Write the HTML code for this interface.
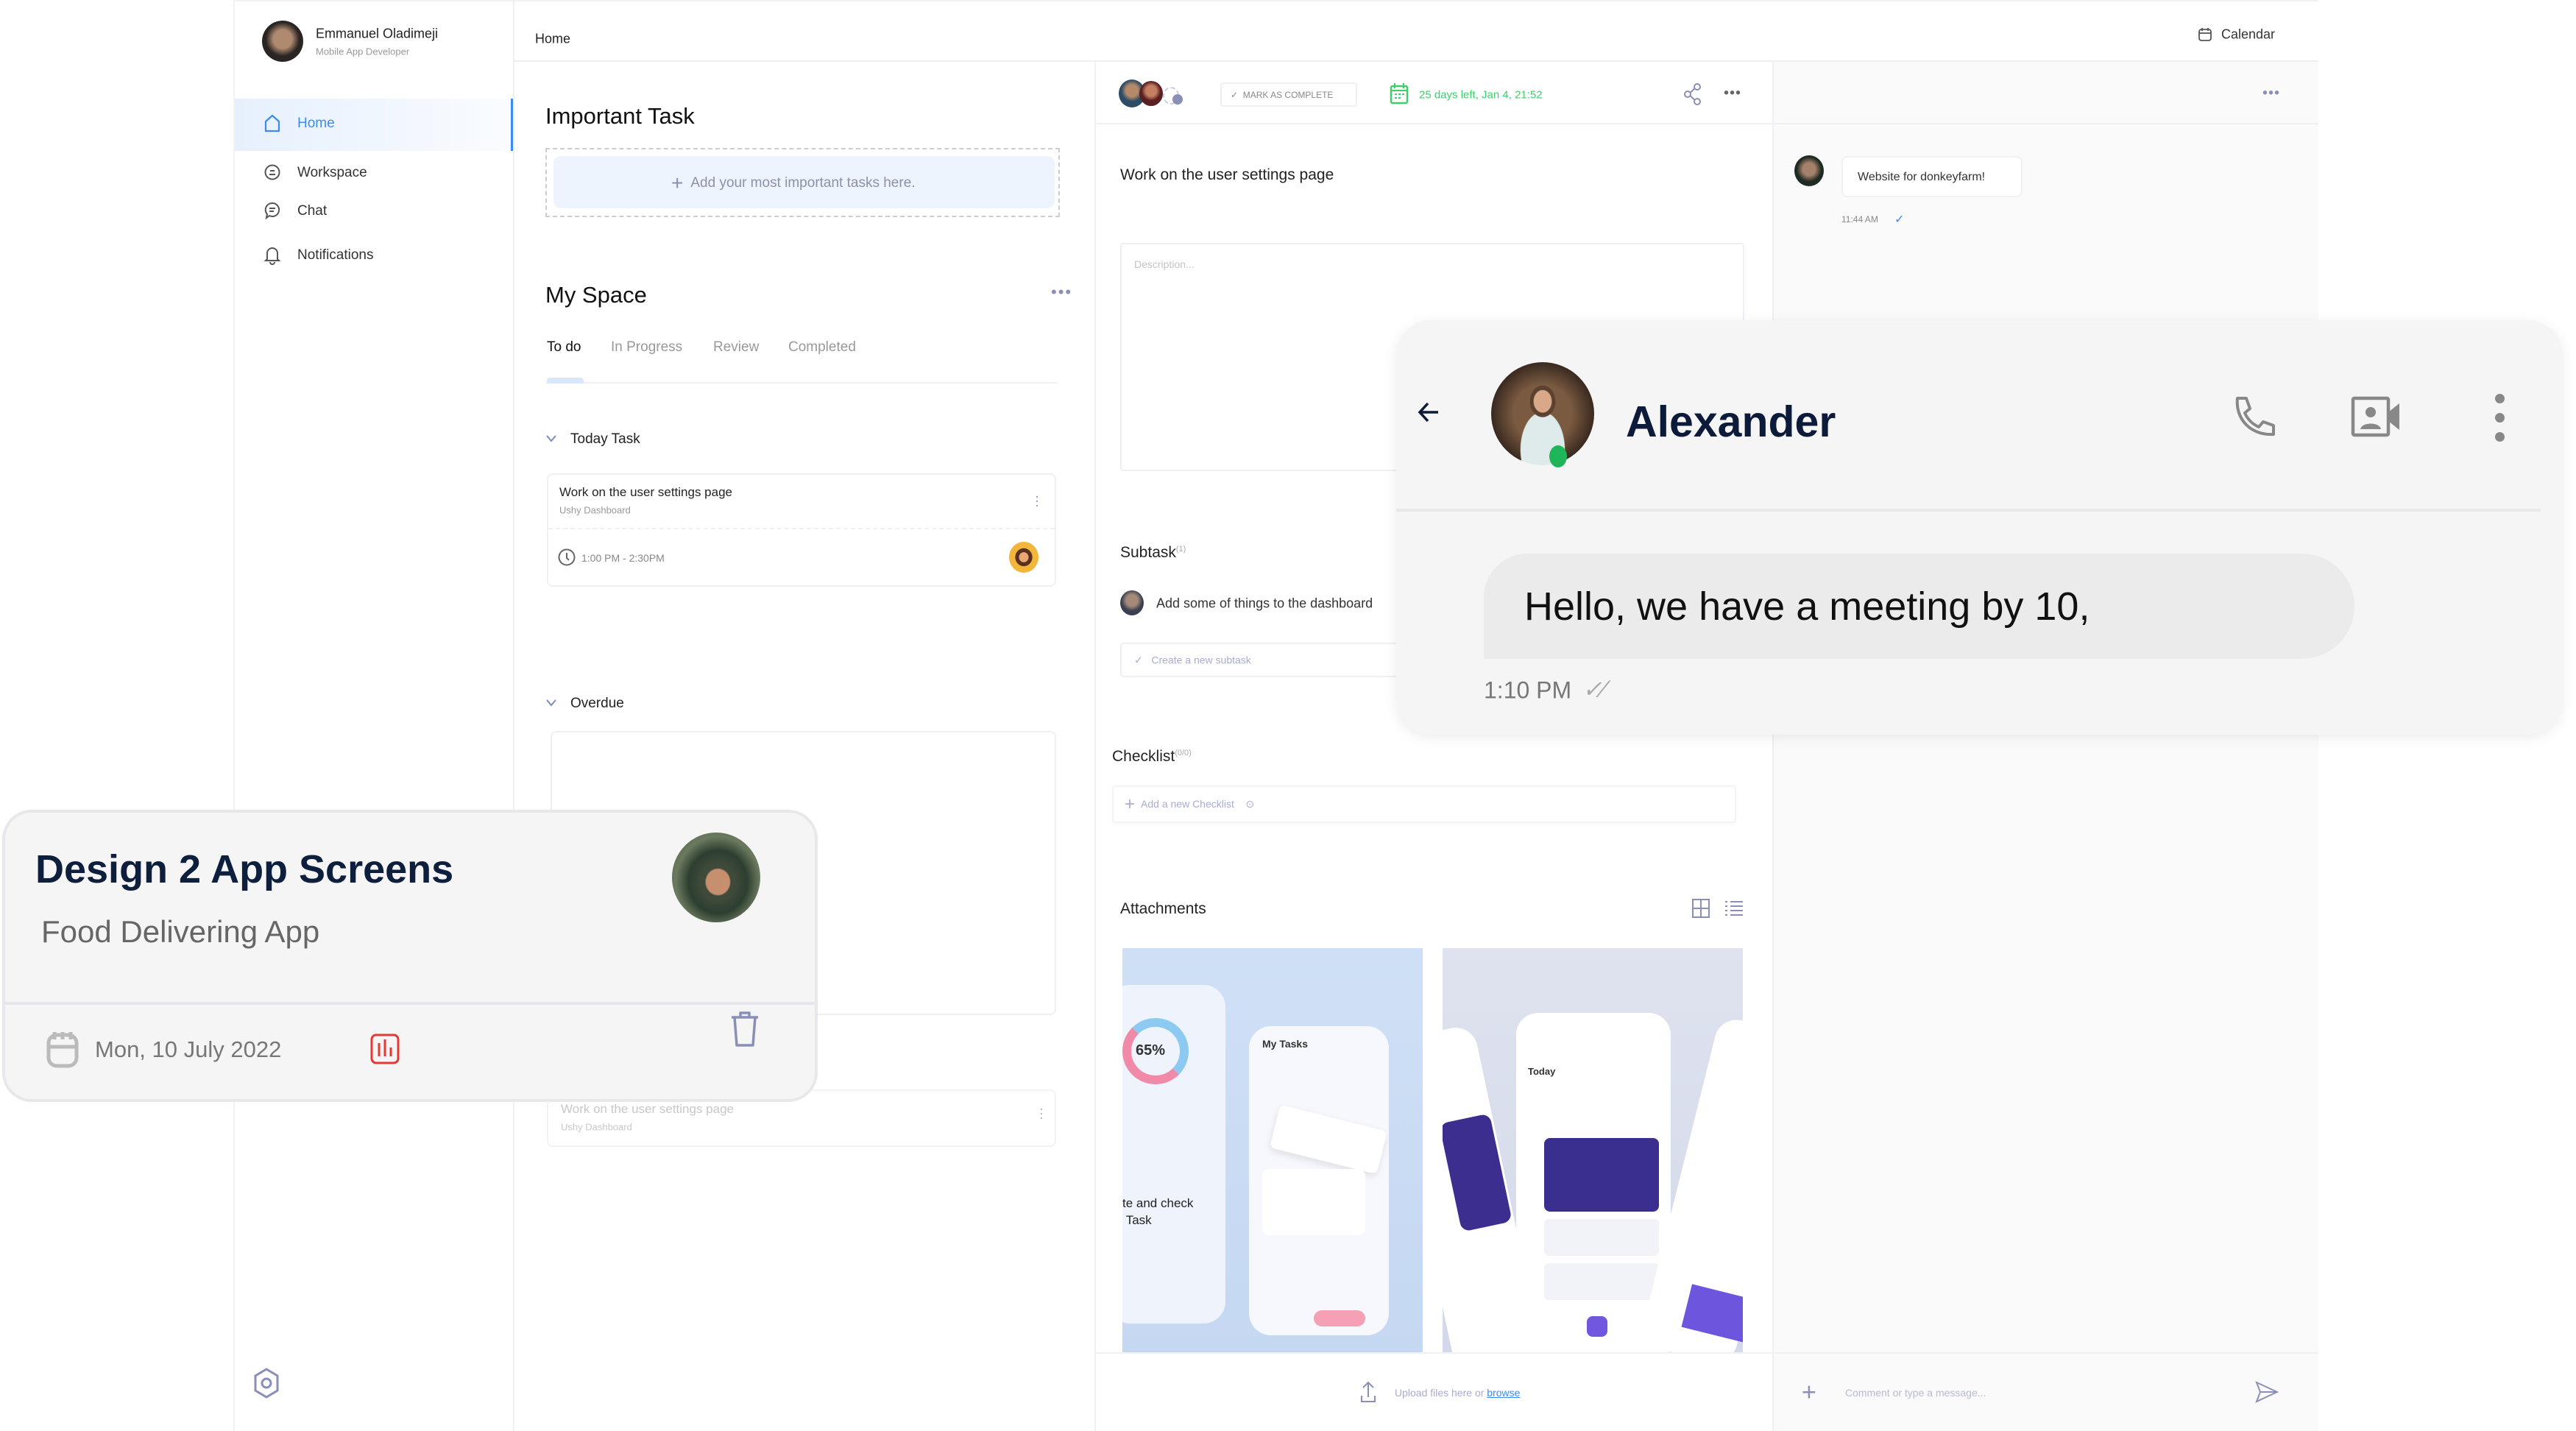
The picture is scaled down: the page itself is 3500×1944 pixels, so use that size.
<!DOCTYPE html>
<html><head><meta charset="utf-8"><style>
*{margin:0;padding:0;box-sizing:border-box}
body{width:3500px;height:1944px;background:#fff;position:relative;overflow:hidden;font-family:"Liberation Sans",sans-serif;color:#222}
.a{position:absolute;white-space:nowrap}
.t{transform:translateY(-50%)}
</style></head><body>

<div class="a" style="left:317px;top:0;width:2833px;height:1944px;background:#fff;border-top:2px solid #f2f2f4"></div>
<div class="a" style="left:317px;top:0;width:382px;height:1944px;border-right:2px solid #eef0f3;border-left:2px solid #f3f3f5"></div>
<div class="a" style="left:356px;top:28px;width:56px;height:56px;border-radius:50%;background:radial-gradient(circle at 50% 45%,#b08a70 0 30%,#2a2522 55%)"></div>
<div class="a t" style="left:429px;top:46px;font-size:18px;color:#222">Emmanuel Oladimeji</div>
<div class="a t" style="left:429px;top:70px;font-size:13px;color:#999">Mobile App Developer</div>
<div class="a" style="left:319px;top:134px;width:377px;height:71px;background:linear-gradient(90deg,#e6f0fd,#fafcff)"></div>
<div class="a" style="left:694px;top:134px;width:3px;height:71px;background:#3b8bf5"></div>
<svg class="a" style="left:358px;top:154px" width="24" height="26" viewBox="0 0 24 26"><path d="M3 24V11L12 3l9 8v13z" fill="none" stroke="#3b8bf5" stroke-width="2.2" stroke-linejoin="round"/></svg>
<div class="a t" style="left:404px;top:168px;font-size:19px;color:#3b8bf5">Home</div>
<svg class="a" style="left:358px;top:221px" width="24" height="26" viewBox="0 0 24 26"><circle cx="12" cy="13" r="9.5" fill="none" stroke="#555" stroke-width="2"/><path d="M8 16h8M9 11h6" stroke="#555" stroke-width="2"/></svg>
<div class="a t" style="left:404px;top:235px;font-size:19px;color:#333">Workspace</div>
<svg class="a" style="left:358px;top:273px" width="24" height="26" viewBox="0 0 24 26"><path d="M12 3a9 9 0 1 1-4 17l-4 3 1-5A9 9 0 0 1 12 3z" fill="none" stroke="#555" stroke-width="2"/><path d="M8 10h8M8 14h6" stroke="#555" stroke-width="2"/></svg>
<div class="a t" style="left:404px;top:287px;font-size:19px;color:#333">Chat</div>
<svg class="a" style="left:358px;top:332px" width="24" height="28" viewBox="0 0 24 28"><path d="M5 20V12a7 7 0 0 1 14 0v8l2 2H3z M9 24a3 3 0 0 0 6 0" fill="none" stroke="#555" stroke-width="2"/></svg>
<div class="a t" style="left:404px;top:347px;font-size:19px;color:#333">Notifications</div>
<svg class="a" style="left:342px;top:1857px" width="40" height="44" viewBox="0 0 40 44"><path d="M20 3l15 9v20l-15 9-15-9V12z" fill="none" stroke="#8a8fb8" stroke-width="3"/><circle cx="20" cy="22" r="6" fill="none" stroke="#8a8fb8" stroke-width="3"/></svg>

<div class="a" style="left:699px;top:82px;width:2451px;height:2px;background:#eef0f3"></div>
<div class="a t" style="left:727px;top:53px;font-size:18px;color:#222">Home</div>
<svg class="a" style="left:2986px;top:37px" width="20" height="20" viewBox="0 0 20 20"><rect x="2" y="3" width="16" height="15" rx="3" fill="none" stroke="#555" stroke-width="1.8"/><path d="M2 8h16M6 1v4M14 1v4" stroke="#555" stroke-width="1.8"/></svg>
<div class="a t" style="left:3018px;top:47px;font-size:18px;color:#333">Calendar</div>

<div class="a" style="left:1487px;top:84px;width:2px;height:1860px;background:#eef0f3"></div>
<div class="a" style="left:2408px;top:84px;width:742px;height:1860px;background:#fafafa;border-left:2px solid #eef0f3"></div>
<div class="a" style="left:1489px;top:167px;width:1661px;height:2px;background:#eef0f3"></div>

<div class="a t" style="left:741px;top:158px;font-size:31px;color:#111">Important Task</div>
<div class="a" style="left:741px;top:201px;width:699px;height:94px;border:2px dashed #c9cdd4"></div>
<div class="a" style="left:752px;top:212px;width:681px;height:71px;background:#eef4fd;border-radius:10px"></div>
<div class="a t" style="left:912px;top:249px;font-size:19px;color:#8a93a6"><span style="font-size:28px;vertical-align:-4px;margin-right:10px">+</span>Add your most important tasks here.</div>
<div class="a t" style="left:741px;top:401px;font-size:31px;color:#111">My Space</div>
<div class="a t" style="left:1428px;top:397px;font-size:22px;color:#8a8fb8;letter-spacing:2px">•••</div>
<div class="a t" style="left:743px;top:472px;font-size:19px;color:#111">To do</div>
<div class="a t" style="left:830px;top:472px;font-size:19px;color:#999">In Progress</div>
<div class="a t" style="left:969px;top:472px;font-size:19px;color:#999">Review</div>
<div class="a t" style="left:1071px;top:472px;font-size:19px;color:#999">Completed</div>
<div class="a" style="left:743px;top:519px;width:694px;height:2px;background:#eef0f3"></div>
<div class="a" style="left:743px;top:513px;width:50px;height:8px;background:#d8e7fb;border-radius:4px 4px 0 0"></div>
<svg class="a" style="left:741px;top:589px" width="16" height="14" viewBox="0 0 16 14"><path d="M2 3l6 7 6-7" fill="none" stroke="#7b8ab8" stroke-width="2"/></svg>
<div class="a t" style="left:775px;top:597px;font-size:19px;color:#222">Today Task</div>
<div class="a" style="left:743px;top:643px;width:692px;height:154px;border:2px solid #eef0f3;border-radius:8px"></div>
<div class="a t" style="left:760px;top:669px;font-size:17px;color:#222">Work on the user settings page</div>
<div class="a t" style="left:760px;top:693px;font-size:13px;color:#999">Ushy Dashboard</div>
<div class="a t" style="left:1406px;top:680px;font-size:18px;color:#8a8fb8;line-height:6px;width:4px">·<br>·<br>·</div>
<div class="a" style="left:745px;top:717px;width:688px;border-top:2px dashed #eef0f3"></div>
<svg class="a" style="left:757px;top:744px" width="26" height="26" viewBox="0 0 26 26"><circle cx="13" cy="13" r="10.5" fill="none" stroke="#666" stroke-width="2"/><path d="M13 7v7l3 3" fill="none" stroke="#666" stroke-width="2"/></svg>
<div class="a t" style="left:790px;top:758px;font-size:14px;color:#888">1:00 PM - 2:30PM</div>
<div class="a" style="left:1371px;top:736px;width:40px;height:42px;border-radius:50%;background:radial-gradient(ellipse at 50% 50%,#e7a872 0 22%,#5a3020 24% 40%,#f2b73a 42%)"></div>
<svg class="a" style="left:741px;top:948px" width="16" height="14" viewBox="0 0 16 14"><path d="M2 3l6 7 6-7" fill="none" stroke="#7b8ab8" stroke-width="2"/></svg>
<div class="a t" style="left:775px;top:956px;font-size:19px;color:#222">Overdue</div>
<div class="a" style="left:748px;top:993px;width:687px;height:386px;border:2px solid #eef0f3;border-radius:8px"></div>
<div class="a" style="left:743px;top:1480px;width:692px;height:78px;border:2px solid #f2f3f5;border-radius:8px"></div>
<div class="a t" style="left:762px;top:1507px;font-size:17px;color:#c8c8cc">Work on the user settings page</div>
<div class="a t" style="left:762px;top:1531px;font-size:13px;color:#c8c8cc">Ushy Dashboard</div>
<div class="a t" style="left:1412px;top:1512px;font-size:18px;color:#a8acd0;line-height:6px;width:4px">·<br>·<br>·</div>

<div class="a" style="left:1520px;top:108px;width:36px;height:38px;border-radius:50%;background:radial-gradient(circle at 50% 40%,#b58a6a 0 28%,#2d4c66 50%)"></div>
<div class="a" style="left:1548px;top:110px;width:32px;height:34px;border-radius:50%;background:radial-gradient(circle at 50% 40%,#c47e62 0 28%,#5a1f22 50%)"></div>
<div class="a" style="left:1580px;top:118px;width:22px;height:24px;border-radius:50%;border:2px dashed #ccd;"></div>
<div class="a" style="left:1593px;top:128px;width:14px;height:14px;border-radius:50%;background:#8a8fb8"></div>
<div class="a" style="left:1658px;top:112px;width:186px;height:33px;border:2px solid #eef0f3;border-radius:4px"></div>
<div class="a t" style="left:1672px;top:129px;font-size:12px;color:#888">✓ &nbsp;MARK AS COMPLETE</div>
<svg class="a" style="left:1888px;top:112px" width="26" height="30" viewBox="0 0 26 30"><rect x="2" y="5" width="22" height="23" rx="2" fill="none" stroke="#3ecf6c" stroke-width="2.5"/><path d="M2 11h22M7 1v7M19 1v7M7 16h3M12 16h3M17 16h3M7 21h3M12 21h3" stroke="#3ecf6c" stroke-width="2"/></svg>
<div class="a t" style="left:1928px;top:129px;font-size:15px;color:#3ecf6c">25 days left, Jan 4, 21:52</div>
<svg class="a" style="left:2286px;top:112px" width="28" height="32" viewBox="0 0 28 32"><circle cx="20" cy="6" r="4" fill="none" stroke="#8a8fb8" stroke-width="2"/><circle cx="7" cy="16" r="4" fill="none" stroke="#8a8fb8" stroke-width="2"/><circle cx="20" cy="26" r="4" fill="none" stroke="#8a8fb8" stroke-width="2"/><path d="M10.5 14l6-6M10.5 18l6 6" stroke="#8a8fb8" stroke-width="2"/></svg>
<div class="a t" style="left:2342px;top:127px;font-size:20px;color:#666;letter-spacing:1px">•••</div>
<div class="a t" style="left:1522px;top:238px;font-size:21px;color:#222">Work on the user settings page</div>
<div class="a" style="left:1522px;top:330px;width:848px;height:310px;border:2px solid #eef0f3;border-radius:4px"></div>
<div class="a t" style="left:1541px;top:359px;font-size:14px;color:#c4c4c8">Description...</div>
<div class="a t" style="left:1522px;top:751px;font-size:21px;color:#222">Subtask<sup style="font-size:11px;color:#aaa">(1)</sup></div>
<div class="a" style="left:1522px;top:802px;width:32px;height:34px;border-radius:50%;background:radial-gradient(circle at 50% 40%,#a58a7a 0 30%,#3a4050 55%)"></div>
<div class="a t" style="left:1571px;top:820px;font-size:18px;color:#333">Add some of things to the dashboard</div>
<div class="a" style="left:1522px;top:873px;width:844px;height:47px;border:2px solid #eef0f3;border-radius:4px"></div>
<div class="a t" style="left:1541px;top:897px;font-size:14px;color:#a8acd0">✓ &nbsp;&nbsp;Create a new subtask</div>
<div class="a t" style="left:1511px;top:1028px;font-size:21px;color:#222">Checklist<sup style="font-size:11px;color:#aaa">(0/0)</sup></div>
<div class="a" style="left:1511px;top:1067px;width:848px;height:51px;border:2px solid #f3f4f6;border-radius:4px;box-shadow:0 2px 6px rgba(0,0,0,.03)"></div>
<div class="a t" style="left:1528px;top:1093px;font-size:14px;color:#a8acd0"><span style="font-size:24px;vertical-align:-3px;margin-right:8px">+</span>Add a new Checklist &nbsp;&nbsp;&nbsp;⊙</div>
<div class="a t" style="left:1522px;top:1235px;font-size:21px;color:#222">Attachments</div>
<svg class="a" style="left:2298px;top:1220px" width="26" height="28" viewBox="0 0 26 28"><rect x="2" y="2" width="22" height="24" fill="none" stroke="#8a8fb8" stroke-width="2"/><path d="M13 2v24M2 14h22" stroke="#8a8fb8" stroke-width="2"/></svg>
<svg class="a" style="left:2342px;top:1222px" width="28" height="24" viewBox="0 0 28 24"><path d="M2 3h3M9 3h17M2 9h3M9 9h17M2 15h3M9 15h17M2 21h3M9 21h17" stroke="#8a8fb8" stroke-width="2"/></svg>
<div class="a" style="left:1525px;top:1288px;width:408px;height:549px;background:linear-gradient(180deg,#cfe0f6,#c5d8f2);overflow:hidden">
  <div class="a" style="left:-20px;top:50px;width:160px;height:460px;background:#eef3fc;border-radius:30px"></div>
  <div class="a" style="left:0;top:95px;width:90px;height:90px;border-radius:50%;border:12px solid #f08aa8;border-top-color:#8ccaf2;border-right-color:#8ccaf2"></div>
  <div class="a" style="left:18px;top:128px;font-size:20px;font-weight:bold;color:#333">65%</div>
  <div class="a" style="left:0;top:335px;font-size:17px;color:#222;line-height:23px">te and check<br>&nbsp;Task</div>
  <div class="a" style="left:172px;top:106px;width:190px;height:420px;background:#f6f8fd;border-radius:30px"></div>
  <div class="a" style="left:190px;top:122px;font-size:14px;font-weight:bold;color:#333">My Tasks</div>
  <div class="a" style="left:205px;top:230px;width:150px;height:60px;background:#fff;border-radius:8px;transform:rotate(14deg);box-shadow:0 4px 10px rgba(0,0,0,.1)"></div>
  <div class="a" style="left:190px;top:300px;width:140px;height:90px;background:#fff;border-radius:10px"></div>
  <div class="a" style="left:260px;top:492px;width:70px;height:22px;background:#f5a0b5;border-radius:11px"></div>
</div>
<div class="a" style="left:1960px;top:1288px;width:408px;height:549px;background:linear-gradient(180deg,#dfe3ef,#d3d8ea);overflow:hidden">
  <div class="a" style="left:-30px;top:110px;width:120px;height:460px;background:#fff;border-radius:30px;transform:rotate(-12deg)"></div>
  <div class="a" style="left:10px;top:230px;width:70px;height:150px;background:#3b2e8f;border-radius:12px;transform:rotate(-12deg)"></div>
  <div class="a" style="left:100px;top:88px;width:210px;height:480px;background:#fff;border-radius:30px"></div>
  <div class="a" style="left:116px;top:160px;font-size:13px;font-weight:bold;color:#333">Today</div>
  <div class="a" style="left:138px;top:258px;width:156px;height:100px;background:#3a2f8e;border-radius:8px"></div>
  <div class="a" style="left:138px;top:368px;width:156px;height:50px;background:#f2f3f8;border-radius:6px"></div>
  <div class="a" style="left:138px;top:428px;width:156px;height:50px;background:#f2f3f8;border-radius:6px"></div>
  <div class="a" style="left:196px;top:500px;width:28px;height:28px;background:#7157e0;border-radius:8px"></div>
  <div class="a" style="left:320px;top:100px;width:130px;height:460px;background:#fff;border-radius:30px;transform:rotate(14deg)"></div>
  <div class="a" style="left:330px;top:470px;width:120px;height:60px;background:#6d55dd;transform:rotate(14deg)"></div>
</div>
<div class="a" style="left:1489px;top:1837px;width:1661px;height:2px;background:#f0f1f3"></div>
<svg class="a" style="left:1848px;top:1874px" width="22" height="32" viewBox="0 0 22 32"><path d="M11 24V4M4 11l7-7 7 7M2 22v8h18v-8" fill="none" stroke="#8a8fb8" stroke-width="2"/></svg>
<div class="a t" style="left:1895px;top:1892px;font-size:14px;color:#a8acd0">Upload files here or <span style="color:#3b8bf5;text-decoration:underline">browse</span></div>

<div class="a t" style="left:3074px;top:127px;font-size:20px;color:#8a8fb8;letter-spacing:1px">•••</div>
<div class="a" style="left:2438px;top:211px;width:40px;height:42px;border-radius:50%;background:radial-gradient(circle at 50% 45%,#a5806a 0 28%,#1f2a22 55%)"></div>
<div class="a" style="left:2502px;top:212px;width:246px;height:56px;background:#fff;border:2px solid #f0f1f3;border-radius:8px"></div>
<div class="a t" style="left:2524px;top:241px;font-size:16px;color:#333">Website for donkeyfarm!</div>
<div class="a t" style="left:2502px;top:298px;font-size:12px;color:#888">11:44 AM</div>
<div class="a t" style="left:2574px;top:298px;font-size:16px;color:#3b8bf5">✓</div>
<div class="a t" style="left:2448px;top:1892px;font-size:34px;color:#8a8fb8">+</div>
<div class="a t" style="left:2507px;top:1892px;font-size:14px;color:#b8bbd0">Comment or type a message...</div>
<svg class="a" style="left:3064px;top:1876px" width="32" height="30" viewBox="0 0 32 30"><path d="M2 2l28 13L2 28l5-13z M7 15h23" fill="none" stroke="#8a8fb8" stroke-width="2"/></svg>

<div class="a" style="left:1897px;top:435px;width:1585px;height:563px;background:#f5f5f5;border-radius:48px;box-shadow:0 4px 18px rgba(0,0,0,.08)"></div>
<div class="a" style="left:1897px;top:691px;width:1555px;height:4px;background:#e8e8e8"></div>
<svg class="a" style="left:1924px;top:540px" width="36" height="40" viewBox="0 0 36 40"><path d="M30 20H6M16 8L5 20l11 12" fill="none" stroke="#0d1b3a" stroke-width="3.5"/></svg>
<div class="a" style="left:2026px;top:492px;width:140px;height:140px;border-radius:50%;background:radial-gradient(ellipse at 50% 38%,#d8a888 0 12%,#5b4230 13% 17%,transparent 18%),radial-gradient(ellipse at 50% 85%,#dfeaea 0 30%,transparent 31%),radial-gradient(circle,#7a5a40 0 40%,#3a2a20 70%)"></div>
<div class="a" style="left:2105px;top:605px;width:24px;height:30px;border-radius:50%;background:#1fb65a"></div>
<div class="a t" style="left:2209px;top:573px;font-size:59px;font-weight:bold;color:#0d1b3a">Alexander</div>
<svg class="a" style="left:3030px;top:536px" width="64" height="64" viewBox="0 0 64 64"><path d="M10 5l12 0 5 14-7 6c4 9 10 15 19 19l6-7 14 5v12c-30 2-52-20-49-49z" fill="none" stroke="#888" stroke-width="4" stroke-linejoin="round"/></svg>
<svg class="a" style="left:3194px;top:538px" width="70" height="56" viewBox="0 0 70 56"><rect x="3" y="3" width="48" height="50" rx="2" fill="none" stroke="#888" stroke-width="4.5"/><circle cx="27" cy="22" r="7" fill="#888"/><path d="M13 45c2-10 26-10 28 0z" fill="#888"/><path d="M51 22l15-12v36L51 34" fill="#888"/></svg>
<div class="a" style="left:3390px;top:535px;width:13px;height:13px;border-radius:50%;background:#888"></div>
<div class="a" style="left:3390px;top:561px;width:13px;height:13px;border-radius:50%;background:#888"></div>
<div class="a" style="left:3390px;top:587px;width:13px;height:13px;border-radius:50%;background:#888"></div>
<div class="a" style="left:2016px;top:752px;width:1183px;height:143px;background:#ebebeb;border-radius:60px 72px 72px 0"></div>
<div class="a t" style="left:2071px;top:824px;font-size:54px;color:#111">Hello, we have a meeting by 10,</div>
<div class="a t" style="left:2016px;top:938px;font-size:32px;color:#777">1:10 PM</div>
<div class="a t" style="left:2150px;top:936px;font-size:32px;color:#aaa;font-style:italic">✓⁄</div>

<div class="a" style="left:3px;top:1100px;width:1108px;height:397px;background:#f5f5f5;border:4px solid #e8e8ec;border-radius:40px;overflow:hidden">
  <div class="a" style="left:0;top:257px;width:1108px;height:4px;background:#e6e6ea"></div>
</div>
<div class="a t" style="left:48px;top:1181px;font-size:54px;font-weight:bold;color:#0d1f3c">Design 2 App Screens</div>
<div class="a t" style="left:56px;top:1266px;font-size:42px;color:#666">Food Delivering App</div>
<div class="a" style="left:913px;top:1131px;width:120px;height:122px;border-radius:50%;background:radial-gradient(ellipse at 52% 55%,#c68f6e 0 18%,#3f4a3a 20% 26%,#2d3e30 45%,#6b7a5e 65%,#4a5a44)"></div>
<svg class="a" style="left:63px;top:1398px" width="44" height="54" viewBox="0 0 44 54"><rect x="3" y="8" width="38" height="42" rx="11" fill="none" stroke="#bbb" stroke-width="5"/><path d="M3 24h38" stroke="#bbb" stroke-width="5"/><path d="M11 4v10M22 4v10M33 4v10" stroke="#bbb" stroke-width="5"/></svg>
<div class="a t" style="left:129px;top:1426px;font-size:31px;color:#777">Mon, 10 July 2022</div>
<svg class="a" style="left:502px;top:1403px" width="42" height="44" viewBox="0 0 42 44"><rect x="3" y="3" width="36" height="38" rx="6" fill="none" stroke="#e53935" stroke-width="3"/><path d="M13 14v18M21 9v23M29 20v12" stroke="#e53935" stroke-width="3"/></svg>
<svg class="a" style="left:990px;top:1373px" width="44" height="50" viewBox="0 0 44 50"><path d="M4 9h36M16 9V3h12v6M8 9l3 38h22l3-38" fill="none" stroke="#8a8fb8" stroke-width="3.5" stroke-linejoin="round"/></svg>

</body></html>
